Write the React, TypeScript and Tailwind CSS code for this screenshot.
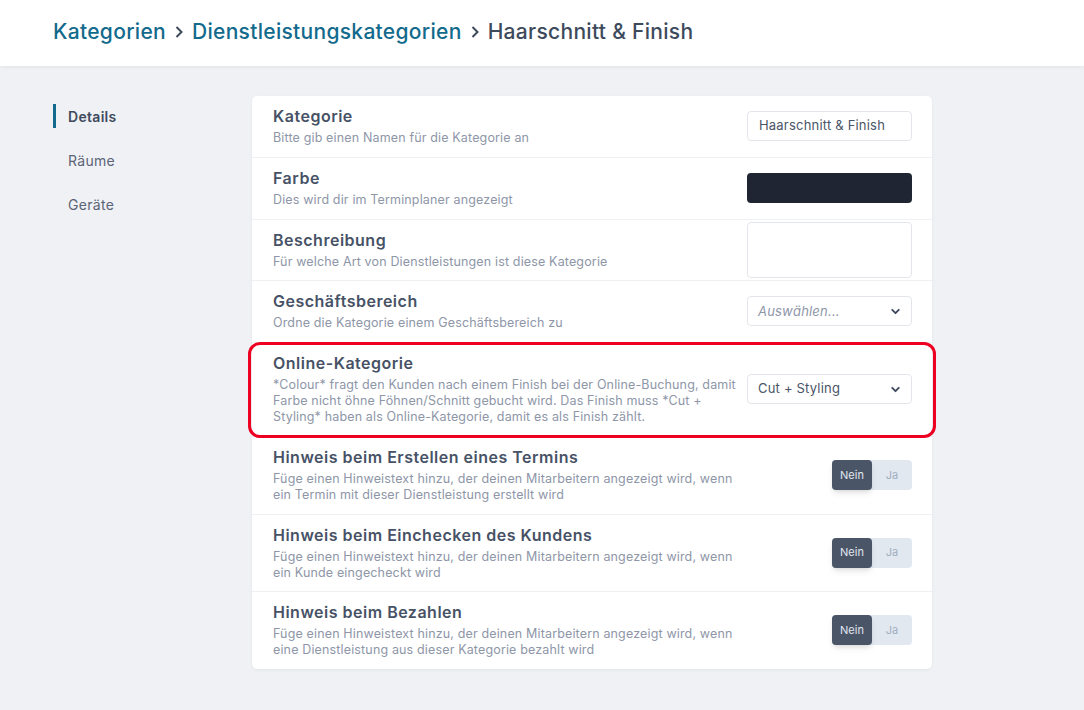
import { ChevronDown } from "lucide-react";

const rows = [
  { title: "Kategorie", desc: "Bitte gib einen Namen für die Kategorie an", kind: "input" },
  { title: "Farbe", desc: "Dies wird dir im Terminplaner angezeigt", kind: "color" },
  { title: "Beschreibung", desc: "Für welche Art von Dienstleistungen ist diese Kategorie", kind: "textarea" },
  { title: "Geschäftsbereich", desc: "Ordne die Kategorie einem Geschäftsbereich zu", kind: "placeholder" },
  {
    title: "Online-Kategorie",
    desc: "*Colour* fragt den Kunden nach einem Finish bei der Online-Buchung, damit Farbe nicht öhne Föhnen/Schnitt gebucht wird. Das Finish muss *Cut + Styling* haben als Online-Kategorie, damit es als Finish zählt.",
    kind: "select",
    marked: true,
  },
  {
    title: "Hinweis beim Erstellen eines Termins",
    desc: "Füge einen Hinweistext hinzu, der deinen Mitarbeitern angezeigt wird, wenn ein Termin mit dieser Dienstleistung erstellt wird",
    kind: "toggle",
  },
  {
    title: "Hinweis beim Einchecken des Kundens",
    desc: "Füge einen Hinweistext hinzu, der deinen Mitarbeitern angezeigt wird, wenn ein Kunde eingecheckt wird",
    kind: "toggle",
  },
  {
    title: "Hinweis beim Bezahlen",
    desc: "Füge einen Hinweistext hinzu, der deinen Mitarbeitern angezeigt wird, wenn eine Dienstleistung aus dieser Kategorie bezahlt wird",
    kind: "toggle",
  },
];

function Control({ kind }: { kind: string }) {
  if (kind === "input")
    return (
      <div className="h-[30px] w-[165px] rounded-[4px] border border-[#e2e5ea] px-[11px] flex items-center text-[13px] tracking-[0.2px] text-[#4a5568]">
        Haarschnitt &amp; Finish
      </div>
    );
  if (kind === "color") return <div className="h-[30px] w-[165px] rounded-[4px] bg-[#1f2532]" />;
  if (kind === "textarea") return <div className="-my-[8px] h-[56px] w-[165px] rounded-[4px] border border-[#e2e5ea]" />;
  if (kind === "placeholder" || kind === "select")
    return (
      <div className="h-[30px] w-[165px] rounded-[4px] border border-[#e2e5ea] pl-[10px] pr-[9px] flex items-center justify-between text-[13px] tracking-[0.2px]">
        {kind === "select" ? (
          <span className="text-[#4a5568]">Cut + Styling</span>
        ) : (
          <span className="italic text-[#8e96a8]">Auswählen...</span>
        )}
        <ChevronDown className="h-[13px] w-[13px] text-[#3f4a5e]" strokeWidth={3.5} />
      </div>
    );
  return (
    <div className="flex h-[30px] w-[80px] rounded-[4px] bg-[#e2e8f0] text-[11px]">
      <div className="flex w-[40px] items-center justify-center rounded-[4px] bg-[#4a5568] text-[#e2e8f0] shadow-md">Nein</div>
      <div className="flex w-[40px] items-center justify-center text-[#a0aec0]">Ja</div>
    </div>
  );
}

function Crumb() {
  return (
    <span className="mx-[8px] text-[#3d4a5c]">
      <svg width="10" height="14" viewBox="0 0 10 14" fill="none">
        <path d="M2.5 2l5 5-5 5" stroke="currentColor" strokeWidth="2" />
      </svg>
    </span>
  );
}

export default function App() {
  return (
    <div className="min-h-[710px] bg-[#f0f1f5] font-['Inter',sans-serif] text-[#4a5568]">
      <header className="h-[66px] bg-white shadow-[0_1px_4px_rgba(0,0,0,0.06)] flex items-center px-[53px] pb-[3px] text-[21px] tracking-[0.3px] font-medium">
        <span className="text-[#126a8c]">Kategorien</span>
        <Crumb />
        <span className="text-[#126a8c]">Dienstleistungskategorien</span>
        <Crumb />
        <span className="text-[#3d4a5c]">Haarschnitt &amp; Finish</span>
      </header>

      <div className="flex px-[53px] pt-[30px] pb-[41px]">
        {/* Sidebar */}
        <nav className="w-[199px] pt-[8px] text-[14px] tracking-[0.3px]">
          <div className="flex h-[24px] items-center border-l-[3px] border-[#126a8c] pl-[12px] font-semibold text-[#3d4a5c]">
            Details
          </div>
          <div className="mt-[20px] flex h-[24px] items-center pl-[15px] text-[#5a6475]">Räume</div>
          <div className="mt-[20px] flex h-[24px] items-center pl-[15px] text-[#5a6475]">Geräte</div>
        </nav>

        {/* Card */}
        <div className="w-[680px] rounded-[5px] bg-white shadow-[0_1px_3px_rgba(0,0,0,0.06)]">
          {rows.map((row, i) => (
            <div
              key={row.title}
              className={`relative grid grid-cols-[1fr_165px] items-center gap-x-[10px] pl-[21px] pr-[20px] pt-[10px] pb-[10.75px] ${
                i < rows.length - 1 ? "border-b border-[#eef0f3]" : ""
              }`}
            >
              <div>
                <div className="text-[16px] leading-[20px] tracking-[0.5px] font-semibold text-[#475266]">{row.title}</div>
                <div className="mt-[4px] text-[12.5px] leading-[16px] tracking-[0.15px] text-[#8e96a8]">{row.desc}</div>
              </div>
              <div className="flex justify-end">
                <Control kind={row.kind} />
              </div>
              {row.marked && (
                <div className="pointer-events-none absolute -left-[4px] -right-[4px] -top-[1px] -bottom-[2px] rounded-[12px] border-[3px] border-[#ee0022]" />
              )}
            </div>
          ))}
        </div>
      </div>
    </div>
  );
}
